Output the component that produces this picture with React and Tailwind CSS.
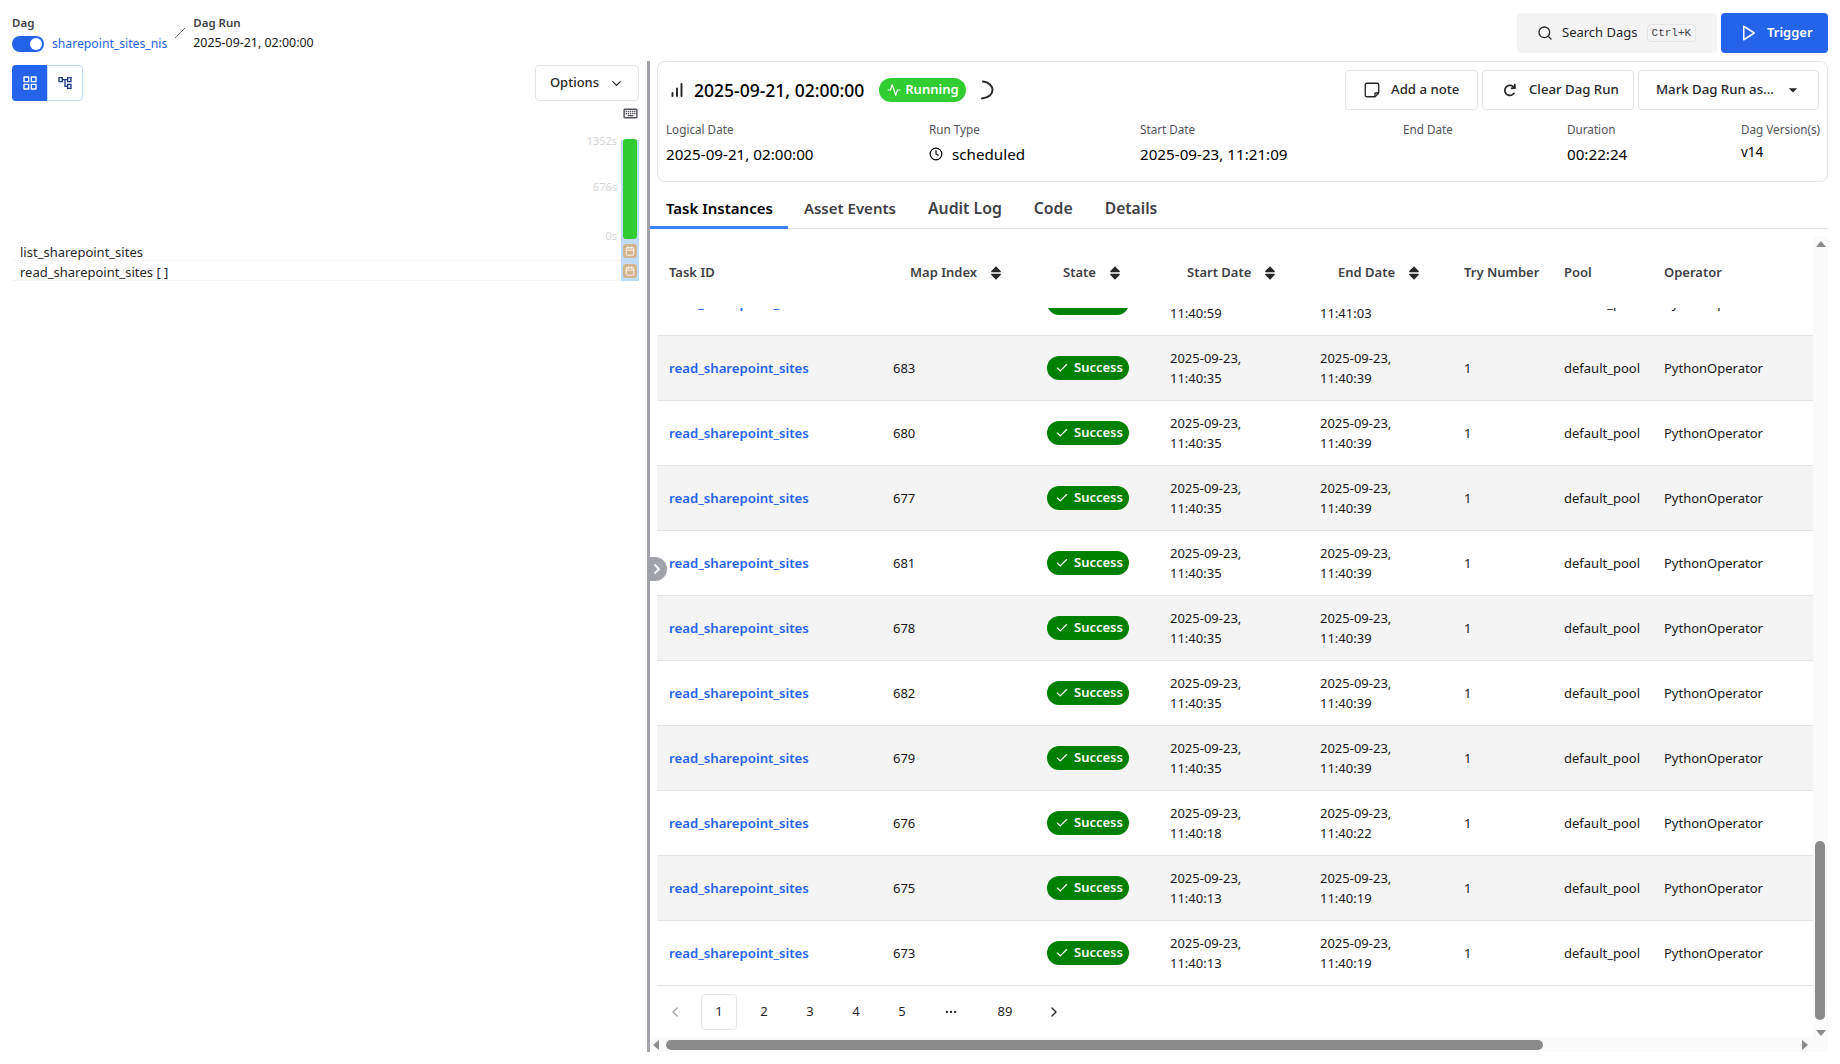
import {
  FiActivity,
  FiBarChart,
  FiCalendar,
  FiCheck,
  FiChevronDown,
  FiChevronLeft,
  FiChevronRight,
  FiClock,
  FiGrid,
  FiMoreHorizontal,
  FiPlay,
  FiSearch,
} from "react-icons/fi";
import { MdArrowDropDown, MdOutlineAccountTree, MdOutlineKeyboard } from "react-icons/md";
import { CgRedo } from "react-icons/cg";
import { TiArrowUnsorted } from "react-icons/ti";

const cols = "grid grid-cols-[224px_154px_123px_150px_144px_100px_100px_161px]";

const rows = [
  { idx: "", start: "11:40:59", end: "11:41:03" },
  { idx: "683", start: "11:40:35", end: "11:40:39" },
  { idx: "680", start: "11:40:35", end: "11:40:39" },
  { idx: "677", start: "11:40:35", end: "11:40:39" },
  { idx: "681", start: "11:40:35", end: "11:40:39" },
  { idx: "678", start: "11:40:35", end: "11:40:39" },
  { idx: "682", start: "11:40:35", end: "11:40:39" },
  { idx: "679", start: "11:40:35", end: "11:40:39" },
  { idx: "676", start: "11:40:18", end: "11:40:22" },
  { idx: "675", start: "11:40:13", end: "11:40:19" },
  { idx: "673", start: "11:40:13", end: "11:40:19" },
];

const Meta = ({ label, children }) => (
  <div className="flex flex-col gap-[5px]">
    <div className="whitespace-nowrap text-[11.7px] leading-[16px] text-[#52525b]">{label}</div>
    <div className="flex h-6 items-center text-[15.2px] leading-[24px] text-black">{children}</div>
  </div>
);

const SortHead = ({ label, pad }) => (
  <div className={`flex items-center gap-[10px] font-semibold text-[#3f3f46] ${pad}`}>
    {label}
    <TiArrowUnsorted className="text-[#27272a]" size={18} />
  </div>
);

const Row = ({ row, shaded }) => (
  <div className={`${cols} h-[65px] shrink-0 items-center border-b border-[#e4e4e7] text-[13px] ${shaded ? "bg-[#f4f4f5]" : ""}`}>
    <div className="pl-3 pt-px text-[13.2px] font-semibold text-[#2563eb]">read_sharepoint_sites</div>
    <div className="pl-3 pt-px text-[#18181b]">{row.idx}</div>
    <div className="pl-3">
      <span className="inline-flex h-6 w-[82px] items-center gap-[5px] rounded-full bg-[#008000] pl-2 font-semibold text-white">
        <FiCheck size={14} />
        Success
      </span>
    </div>
    <div className="pl-3 leading-5 text-[#18181b]">
      2025-09-23,
      <br />
      {row.start}
    </div>
    <div className="pl-3 leading-5 text-[#18181b]">
      2025-09-23,
      <br />
      {row.end}
    </div>
    <div className="pl-3 pt-px text-[#18181b]">1</div>
    <div className="pl-3 pt-px text-[#18181b]">default_pool</div>
    <div className="pl-3 pt-px text-[#18181b]">PythonOperator</div>
  </div>
);

const PageBtn = ({ children, active, w }) => (
  <div className={`flex h-9 items-center justify-center rounded text-[13px] text-[#27272a] ${w} ${active ? "border border-[#e4e4e7]" : ""}`}>
    {children}
  </div>
);

const StateCell = () => (
  <div className="flex size-[14px] items-center justify-center rounded-[3px] bg-[#d2b48c] text-white">
    <FiCalendar size={10} />
  </div>
);

const NoteIcon = () => (
  <svg width="18" height="18" viewBox="0 0 24 24" fill="none" stroke="currentColor" strokeWidth="1.8" strokeLinejoin="round">
    <path d="M5 3h14a2 2 0 0 1 2 2v11l-5 5H5a2 2 0 0 1-2-2V5a2 2 0 0 1 2-2z" />
    <path d="M21 16h-4a1 1 0 0 0-1 1v4" />
  </svg>
);

export default function App() {
  return (
    <div className="h-[1052px] w-full flex flex-col overflow-hidden bg-white font-['Noto_Sans',sans-serif] text-[13px] text-[#18181b]">
      <div className="flex h-[61px] shrink-0 items-start justify-between pl-3 pr-3">
        <div className="flex pt-[15px]">
          <div className="flex flex-col">
            <div className="text-[11.5px] leading-4 font-semibold text-[#3f3f46]">Dag</div>
            <div className="mt-1 flex items-center gap-2">
              <div className="flex h-4 w-8 items-center justify-end rounded-full bg-[#2563eb] pr-[2px]">
                <div className="size-3 rounded-full bg-white" />
              </div>
              <span className="text-[12.2px] text-[#2563eb]">sharepoint_sites_nis</span>
            </div>
          </div>
          <div className="mx-2 mt-[13px] h-[10px] w-[10px]">
            <svg width="10" height="10" viewBox="0 0 10 10">
              <path d="M0 10 L10 0" stroke="#71717a" strokeWidth="1" />
            </svg>
          </div>
          <div className="flex flex-col">
            <div className="text-[11.5px] leading-4 font-semibold text-[#3f3f46]">Dag Run</div>
            <div className="mt-1 text-[12.4px] leading-4 text-[#18181b]">2025-09-21, 02:00:00</div>
          </div>
        </div>
        <div className="flex gap-1 pt-[13px]">
          <div className="flex h-10 w-[200px] items-center rounded bg-[#f4f4f5] pl-5">
            <FiSearch size={16} className="text-[#27272a]" />
            <span className="ml-[9px] text-[#27272a]">Search Dags</span>
            <kbd className="ml-[9px] rounded border border-[#e4e4e7] px-1 font-['Liberation_Mono',monospace] text-[11px] leading-4 text-[#3f3f46]">Ctrl+K</kbd>
          </div>
          <div className="flex h-10 w-[107px] items-center gap-[9px] rounded bg-[#2563eb] pl-[19px] font-semibold text-white">
            <FiPlay size={18} />
            Trigger
          </div>
        </div>
      </div>

      <div className="flex min-h-0 flex-1">
        <div className="w-[647px] shrink-0 pl-3 pr-2">
          <div className="mt-1 flex items-center justify-between">
            <div className="flex h-9">
              <div className="flex w-[35px] items-center justify-center rounded-l bg-[#2563eb] text-white">
                <FiGrid size={16} />
              </div>
              <div className="flex w-[36px] items-center justify-center rounded-r border border-[#bfdbfe] text-[#1e3a8a]">
                <MdOutlineAccountTree size={16} />
              </div>
            </div>
            <div className="flex h-9 w-[104px] items-center justify-center gap-[10px] rounded border border-[#e4e4e7] font-medium text-[#27272a]">
              Options
              <FiChevronDown size={15} />
            </div>
          </div>
          <div className="mt-[4px] flex justify-end">
            <MdOutlineKeyboard size={17} className="text-[#52525b]" />
          </div>
          <div className="-mb-[3px] mt-[12px] flex justify-end">
            <div className="mr-[4px] flex h-[110px] flex-col items-end justify-between text-[11px] leading-[14px] text-[#d4d4d8]">
              <span>1352s</span>
              <span className="mb-[3px]">676s</span>
              <span className="mb-px">0s</span>
            </div>
            <div className="w-[18px]" />
          </div>
          <div className="relative">
            <div className="absolute -top-[101px] right-0 flex h-[141px] w-[18px] flex-col items-center bg-[#bfdbfe]">
              <div className="-mt-[1px] h-[100px] w-[14px] shrink-0 rounded-[3px] bg-[#32cd32]" />
              <div className="mt-[5px]"><StateCell /></div>
              <div className="mt-[6px]"><StateCell /></div>
            </div>
            <div className="h-5 border-b border-[#f4f4f5] pl-2 pt-[3px] leading-4 text-[#27272a]">list_sharepoint_sites</div>
            <div className="h-5 border-b border-[#f4f4f5] pl-2 pt-[3px] leading-4 text-[#27272a]">read_sharepoint_sites [ ]</div>
          </div>
        </div>

        <div className="relative w-[3px] shrink-0 bg-[#a1a1aa]">
          <div className="absolute left-0 top-[496px] z-10 flex h-6 w-5 items-center justify-center rounded-r-full bg-[#a1a1aa] text-white">
            <FiChevronRight size={16} strokeWidth={3} />
          </div>
        </div>

        <div className="flex min-w-0 flex-1 flex-col pr-3">
          <div className="ml-[7px] h-[121px] shrink-0 rounded-lg border border-[#e4e4e7] pl-2 pr-2">
            <div className="flex h-[56px] items-center justify-between">
              <div className="flex items-center">
                <FiBarChart size={18} strokeWidth={2.6} className="ml-[2px] text-[#27272a]" />
                <span className="ml-[8px] text-[17.5px] font-medium text-black">2025-09-21, 02:00:00</span>
                <span className="ml-[15px] flex h-6 w-[87px] items-center gap-1 rounded-full bg-[#32cd32] pl-2 font-semibold text-white">
                  <FiActivity size={14} />
                  Running
                </span>
                <svg className="ml-[14px]" width="14" height="20" viewBox="0 0 14 20" fill="none">
                  <path d="M3 1.5 C9 2 12.5 6 12.5 10 C12.5 14 9 18 2 18.5" stroke="#27272a" strokeWidth="2" strokeLinecap="round" />
                </svg>
              </div>
              <div className="flex gap-1 text-[13.2px] font-medium text-[#27272a]">
                <div className="flex h-10 w-[133px] items-center gap-[10px] rounded border border-[#e4e4e7] pl-[17px]">
                  <NoteIcon />
                  Add a note
                </div>
                <div className="flex h-10 w-[152px] items-center gap-[9px] rounded border border-[#e4e4e7] pl-[17px]">
                  <CgRedo size={20} />
                  Clear Dag Run
                </div>
                <div className="flex h-10 w-[181px] items-center gap-[9px] rounded border border-[#e4e4e7] pl-[17px]">
                  Mark Dag Run as...
                  <MdArrowDropDown size={20} />
                </div>
              </div>
            </div>
            <div className="grid grid-cols-[263px_211px_263px_164px_174px_1fr] pt-[3px]">
              <Meta label="Logical Date">2025-09-21, 02:00:00</Meta>
              <Meta label="Run Type">
                <FiClock size={14} className="mr-[9px]" />
                scheduled
              </Meta>
              <Meta label="Start Date">2025-09-23, 11:21:09</Meta>
              <Meta label="End Date"></Meta>
              <Meta label="Duration">00:22:24</Meta>
              <Meta label="Dag Version(s)"><span className="-mt-1 text-[13.5px]">v14</span></Meta>
            </div>
          </div>

          <div className="mt-[9px] flex h-[38px] shrink-0 items-start border-b border-[#e4e4e7] text-[15px] font-semibold text-[#3f3f46]">
            <div className="-mb-px h-[38px] border-b-[3px] border-[#3b82f6] pl-4 pr-[15px] pt-[6px] text-black">Task Instances</div>
            <div className="px-4 pt-[6px]">Asset Events</div>
            <div className="px-4 pt-[6px] text-[15.8px] leading-[22px]">Audit Log</div>
            <div className="px-4 pt-[6px] text-[15.8px] leading-[22px]">Code</div>
            <div className="px-4 pt-[6px] text-[15.6px] leading-[22px]">Details</div>
          </div>

          <div className="relative ml-[7px] flex min-h-0 flex-1 flex-col pt-[7px]">
            <div className={`${cols} h-[72px] shrink-0 items-center pt-px text-[13px]`}>
              <div className="pl-3 font-semibold text-[#3f3f46]">Task ID</div>
              <SortHead label="Map Index" pad="pl-[29px]" />
              <SortHead label="State" pad="pl-[28px]" />
              <SortHead label="Start Date" pad="pl-[29px]" />
              <SortHead label="End Date" pad="pl-[30px]" />
              <div className="pl-3 font-semibold text-[#3f3f46]">Try Number</div>
              <div className="pl-3 font-semibold text-[#3f3f46]">Pool</div>
              <div className="pl-3 font-semibold text-[#3f3f46]">Operator</div>
            </div>
            <div className="flex h-[678px] shrink-0 flex-col justify-end overflow-hidden">
              {rows.map((row, i) => (
                <Row key={i} row={row} shaded={i % 2 === 1} />
              ))}
            </div>
            <div className="flex h-[51px] shrink-0 items-center pt-[8px] pb-[7px]">
              <PageBtn w="w-[36px] ml-0"><FiChevronLeft size={16} className="text-[#a1a1aa]" /></PageBtn>
              <PageBtn w="w-[36px] ml-[8px] bg-white" active>1</PageBtn>
              <PageBtn w="w-[36px] ml-[9px]">2</PageBtn>
              <PageBtn w="w-[36px] ml-[10px]">3</PageBtn>
              <PageBtn w="w-[36px] ml-[10px]">4</PageBtn>
              <PageBtn w="w-[36px] ml-[10px]">5</PageBtn>
              <PageBtn w="w-[36px] ml-[13px]"><FiMoreHorizontal size={14} /></PageBtn>
              <PageBtn w="w-[36px] ml-[18px]">89</PageBtn>
              <PageBtn w="w-[36px] ml-[13px]"><FiChevronRight size={16} /></PageBtn>
            </div>

            {/* fake scrollbars, the real ones don't draw in headless */}
            <div className="absolute right-0 top-[7px] bottom-[15px] w-[15px] bg-[#fafafa]">
              <div className="absolute left-1/2 top-[5px] h-0 w-0 -translate-x-1/2 border-x-[5px] border-b-[6px] border-x-transparent border-b-[#8b8b8b]" />
              <div className="absolute bottom-[17px] left-[2px] h-[179px] w-[10px] rounded-full bg-[#8b8b8b]" />
              <div className="absolute bottom-[1px] left-1/2 h-0 w-0 -translate-x-1/2 border-x-[5px] border-t-[6px] border-x-transparent border-t-[#8b8b8b]" />
            </div>
            <div className="absolute -left-[6px] bottom-0 right-0 h-[15px] bg-[#fafafa]">
              <div className="absolute left-[2px] top-[3px] h-0 w-0 border-y-[5px] border-r-[6px] border-y-transparent border-r-[#8b8b8b]" />
              <div className="absolute left-[15px] top-[3px] h-[10px] w-[877px] rounded-full bg-[#8b8b8b]" />
              <div className="absolute right-[20px] top-[3px] h-0 w-0 border-y-[5px] border-l-[6px] border-y-transparent border-l-[#8b8b8b]" />
            </div>
          </div>
        </div>
      </div>
    </div>
  );
}
